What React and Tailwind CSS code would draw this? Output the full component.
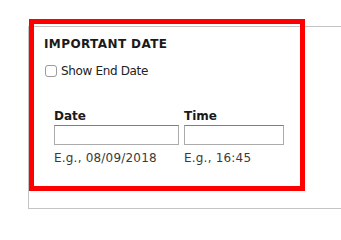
import React from "react";

const Field = ({ label, hint, width }) => (
  <div className="flex flex-col">
    <label className="text-[12px] leading-[14px] font-bold text-[#1a1a1a]">{label}</label>
    <input
      type="text"
      className={`mt-[2px] h-[20px] ${width} border border-[#ababab] border-t-[#7f7f7f] bg-white outline-none`}
    />
    <span className="mt-[6px] text-[12px] leading-[14px] tracking-[0.2px] text-[#3a3a3a]">{hint}</span>
  </div>
);

export default function App() {
  return (
    <div
      className="relative w-[341px] h-[223px] overflow-hidden bg-white"
      style={{ fontFamily: '"DejaVu Sans", Verdana, sans-serif' }}
    >
      <div className="ml-[28px] mt-[26px] w-[340px] h-[183px] border-l border-t border-b border-[#c4c4c4] pl-[15px] pt-[10px]">
        <h2 className="text-[12px] leading-[14px] font-bold tracking-[0.4px] text-[#1a1a1a]">
          IMPORTANT DATE
        </h2>

        <label className="mt-[13px] flex items-center h-[14px]">
          <span className="ml-[1px] w-[12px] h-[12px] rounded-[3px] border border-[#9b9b9b] bg-white" />
          <span className="ml-[4px] text-[12px] leading-[14px] tracking-[-0.35px] text-[#222]">
            Show End Date
          </span>
        </label>

        <div className="mt-[31px] ml-[10px] flex gap-[5px]">
          <Field label="Date" hint="E.g., 08/09/2018" width="w-[125px]" />
          <Field label="Time" hint="E.g., 16:45" width="w-[100px]" />
        </div>
      </div>

      {/* red highlight box over the panel */}
      <div className="absolute left-[29px] top-[19px] w-[276px] h-[172px] border-[5px] border-[#ff0000]" />
    </div>
  );
}
